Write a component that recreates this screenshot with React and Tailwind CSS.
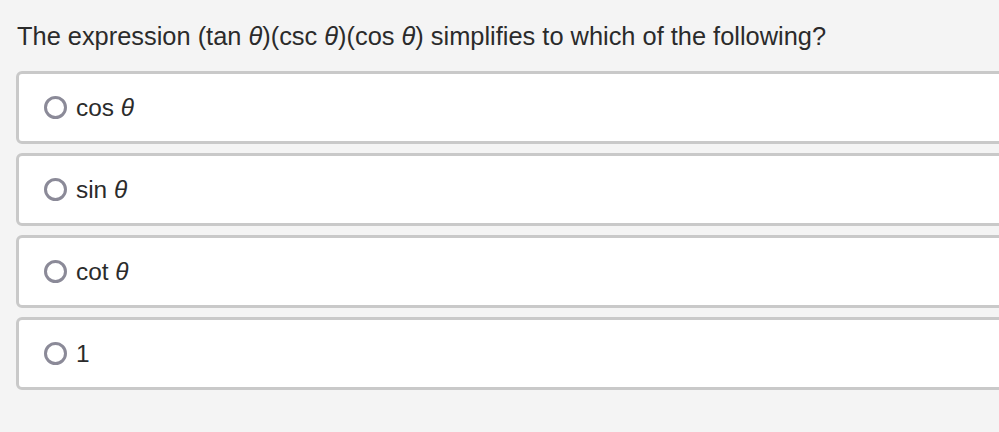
import React from 'react';

// 選択肢のデータです。
const options = [
  { id: 'a', label: 'cos', theta: true },
  { id: 'b', label: 'sin', theta: true },
  { id: 'c', label: 'cot', theta: true },
  { id: 'd', label: '1', theta: false },
];

const Theta = () => <span className="italic">θ</span>;

const App = () => {
  return (
    <div className="min-h-[432px] w-[999px] overflow-hidden bg-[#f4f4f4] font-['Liberation_Sans',Arial,sans-serif] text-[#2b2b2b]">
      <div className="pl-[17px] pt-[20px]">
        <h2 className="text-[25.4px] leading-[32px]">
          The expression (tan <Theta />)(csc <Theta />)(cos <Theta />) simplifies to which of the following?
        </h2>

        <div className="mt-[19px] flex w-[1000px] flex-col gap-[9px] -ml-px">
          {options.map((opt) => (
            <label
              key={opt.id}
              className="flex h-[73px] items-center rounded-[6px] border-[3px] border-[#c9c9c9] bg-white pl-[25px]"
            >
              <span className="h-[23px] w-[23px] shrink-0 rounded-full border-[3px] border-[#8b8a98] bg-white" />
              <span className="ml-[9px] text-[24.4px] leading-[28px]">
                {opt.label}
                {opt.theta && (
                  <>
                    {' '}
                    <Theta />
                  </>
                )}
              </span>
            </label>
          ))}
        </div>
      </div>
    </div>
  );
};

export default App;
